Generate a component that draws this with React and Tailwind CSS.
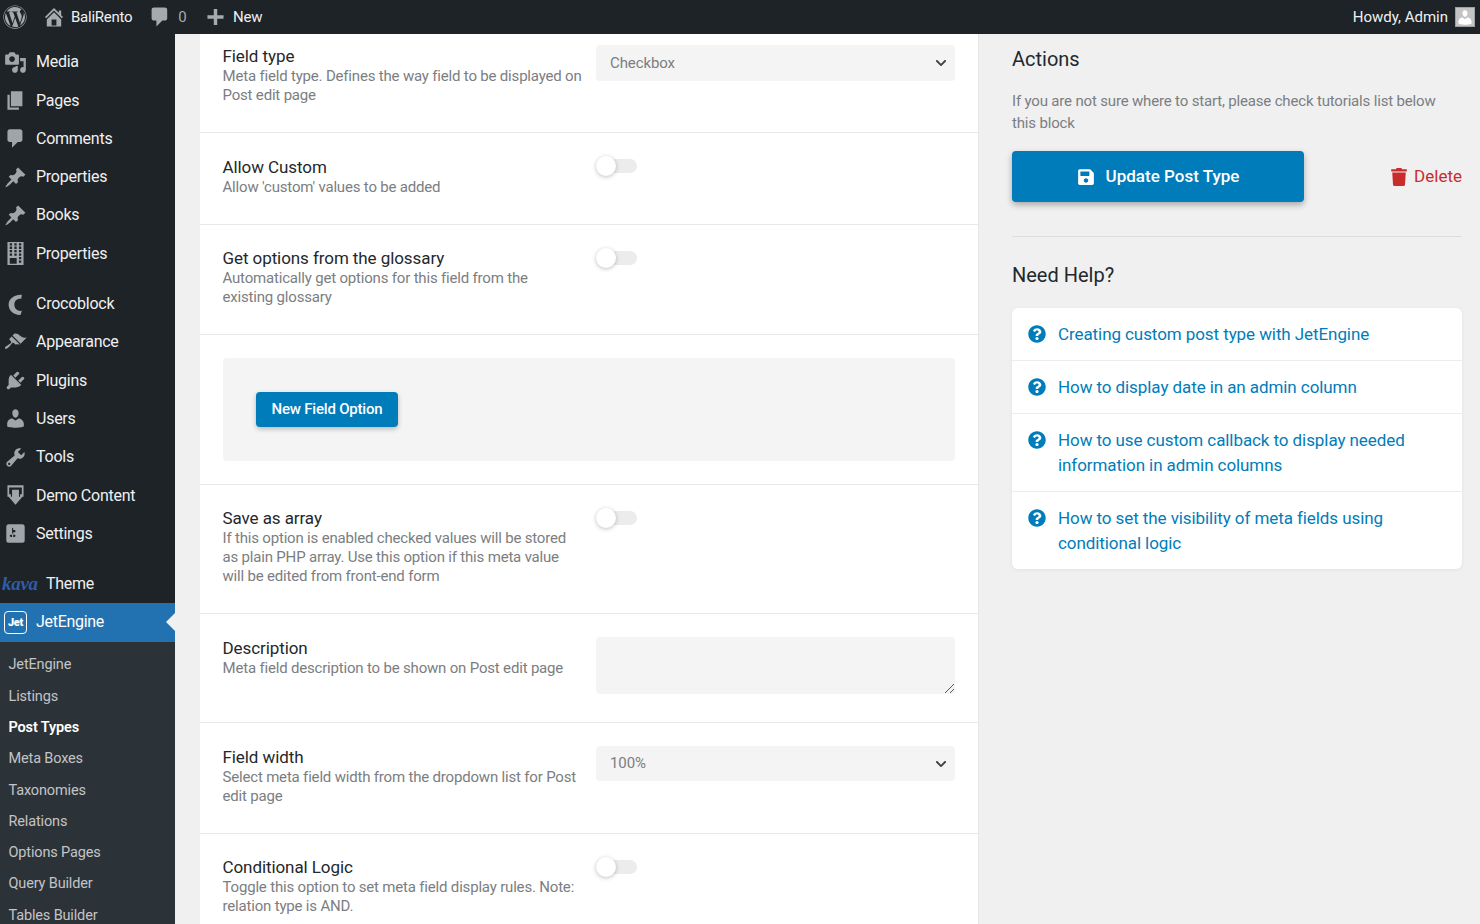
import { FaWordpress, FaSave, FaTrash, FaQuestionCircle, FaChevronDown } from "react-icons/fa";

const P = {
  media: "M13 11V4c0-.55-.45-1-1-1h-1.67L9 1H5L3.67 3H2c-.55 0-1 .45-1 1v7c0 .55.45 1 1 1h10c.55 0 1-.45 1-1zM7 4.5c1.38 0 2.5 1.12 2.5 2.5S8.38 9.5 7 9.5 4.5 8.38 4.5 7 5.62 4.5 7 4.5zM14 6h5v10.5c0 1.38-1.12 2.5-2.5 2.5S14 17.88 14 16.5s1.12-2.5 2.5-2.5c.17 0 .34.02.5.05V9h-3V6zm-4 8.05V13h2v3.5c0 1.38-1.12 2.5-2.5 2.5S7 17.88 7 16.5 8.12 14 9.5 14c.17 0 .34.02.5.05z",
  pages: "M6 15V2h10v13H6zm-1 1h8v2H3V5h2v11z",
  comment: "M5 2h9q.82 0 1.41.59T16 4v7q0 .82-.59 1.41T14 13h-2l-5 5v-5H5q-.82 0-1.41-.59T3 11V4q0-.82.59-1.41T5 2z",
  pin: "M10.44 3.02l1.82-1.82 6.36 6.35-1.83 1.82c-1.05-.68-2.48-.57-3.41.36l-.75.75c-.92.93-1.04 2.35-.35 3.41l-1.83 1.82-2.41-2.41-2.8 2.79c-.42.42-3.38 2.71-3.8 2.29s1.86-3.39 2.28-3.81l2.79-2.79L4.1 9.36l1.83-1.82c1.05.69 2.48.57 3.4-.36l.75-.75c.93-.92 1.05-2.35.36-3.41z",
  building: "M3 20h14V0H3v20zM7 3H5V1h2v2zm4 0H9V1h2v2zm4 0h-2V1h2v2zM7 6H5V4h2v2zm4 0H9V4h2v2zm4 0h-2V4h2v2zM7 9H5V7h2v2zm4 0H9V7h2v2zm4 0h-2V7h2v2zm-8 3H5v-2h2v2zm4 0H9v-2h2v2zm4 0h-2v-2h2v2zm-4 7H5v-5h6v5zm4-4h-2v-2h2v2zm0 3h-2v-2h2v2z",
  croco: "M15.500 1.500C10 1 4 4.500 4 10s5 9.500 10.500 9l1-3.500c-4 .5-6.500-2-6.500-5.500s2.500-5.500 6-5z",
  brush: "M14.48 11.06L7.41 3.99l1.5-1.5c.5-.56 2.3-.47 3.51.32 1.21.8 1.43 1.28 2.91 2.1 1.18.64 2.45 1.26 4.45.85zm-.71.71L6.7 4.7 4.93 6.47c-.39.39-.39 1.02 0 1.41l1.06 1.06c.39.39.39 1.03 0 1.42-.6.6-1.43 1.11-2.21 1.69-.35.26-.7.53-1.01.84C1.43 13.23.4 14.85 1.02 15.47c.61.62 2.24-.41 3.58-1.76.31-.31.58-.66.85-1.02.57-.78 1.08-1.61 1.69-2.21.39-.39 1.02-.39 1.41 0l1.06 1.06c.39.39 1.02.39 1.41 0z",
  plug: "M13.11 4.36L9.87 7.6 8 5.73l3.24-3.24c.35-.34 1.05-.2 1.56.32.52.51.66 1.21.31 1.55zm-8 1.77l.91-1.12 9.01 9.01-1.19.84c-.71.71-2.63 1.16-3.82 1.16H6.14L4.9 17.26c-.59.59-1.54.59-2.12 0-.59-.58-.59-1.53 0-2.12l1.24-1.24v-3.88c0-1.13.4-3.19 1.09-3.89zm7.26 3.97l3.24-3.24c.34-.35 1.04-.21 1.55.31.52.51.66 1.21.31 1.55l-3.24 3.25z",
  user: "M10 9.25c-2.27 0-2.73-3.44-2.73-3.44C7 4.02 7.82 2 9.97 2c2.16 0 2.98 2.02 2.71 3.81 0 0-.41 3.44-2.68 3.44zm0 2.57L12.72 10c2.39 0 4.52 2.33 4.52 4.53v2.49s-3.65 1.13-7.24 1.13c-3.65 0-7.24-1.13-7.24-1.13v-2.49c0-2.25 1.94-4.48 4.47-4.48z",
  tool: "M16.68 9.77c-1.34 1.34-3.3 1.67-4.95.99l-5.41 6.52c-.99.99-2.59.99-3.58 0s-.99-2.59 0-3.57l6.52-5.42c-.68-1.65-.35-3.61.99-4.95 1.28-1.28 3.12-1.62 4.72-1.06l-2.89 2.89 2.82 2.82 2.86-2.87c.53 1.58.18 3.39-1.08 4.65zM3.81 16.21c.4.39 1.04.39 1.43 0 .4-.4.4-1.04 0-1.43-.39-.4-1.03-.4-1.43 0-.39.39-.39 1.03 0 1.43z",
  demo: "M3 1h14v10h-3V9h1.500V3h-11v6H6v2H3zM7 5h6v6h3l-6 7-6-7h3z",
  sliders: "M18 16V4c0-1.1-.9-2-2-2H4c-1.1 0-2 .9-2 2v12c0 1.1.9 2 2 2h12c1.1 0 2-.9 2-2zM8 11h1c.55 0 1 .45 1 1s-.45 1-1 1H8v1.5c0 .28-.22.5-.5.5s-.5-.22-.5-.5V13H6c-.55 0-1-.45-1-1s.45-1 1-1h1V5.5c0-.28.22-.5.5-.5s.5.22.5.5V7h1c.55 0 1 .45 1 1s-.45 1-1 1h-1v5.5c0 .28-.22.5-.5.5s-.5-.22-.5-.5V9z",
  home: "M16 8.5l1.53 1.53-1.06 1.06L10 4.62l-6.47 6.47-1.06-1.06L10 2.5l4 4v-2h2v4zm-6-2.46l6 5.99V18H4v-5.97zM12 17v-5H8v5h4z",
  plus: "M17 8v3h-5.500v5.500h-3V11H3V8h5.500V2.500h3V8z",
};

const Dash = ({ d, className }) => (
  <svg viewBox="0 0 20 20" fill="currentColor" fillRule="evenodd" className={className}>
    <path d={d} />
  </svg>
);

const MENU_TOP = [
  { icon: P.media, label: "Media" },
  { icon: P.pages, label: "Pages" },
  { icon: P.comment, label: "Comments" },
  { icon: P.pin, label: "Properties" },
  { icon: P.pin, label: "Books" },
  { icon: P.building, label: "Properties" },
];

const MENU_MID = [
  { icon: P.croco, label: "Crocoblock" },
  { icon: P.brush, label: "Appearance" },
  { icon: P.plug, label: "Plugins" },
  { icon: P.user, label: "Users" },
  { icon: P.tool, label: "Tools" },
  { icon: P.demo, label: "Demo Content" },
  { icon: P.sliders, label: "Settings" },
];

const SUBMENU = ["JetEngine", "Listings", "Post Types", "Meta Boxes", "Taxonomies", "Relations", "Options Pages", "Query Builder", "Tables Builder"];

const HELP = [
  "Creating custom post type with JetEngine",
  "How to display date in an admin column",
  "How to use custom callback to display needed information in admin columns",
  "How to set the visibility of meta fields using conditional logic",
];

function MenuRow({ icon, label }) {
  return (
    <div className="h-[38.3px] flex items-center text-[16px] tracking-[-0.25px] text-[#f0f0f1]">
      <div className="w-[30px] mr-[6px] flex justify-center">
        <Dash d={icon} className="w-[23px] h-[23px] text-[#a0a5aa]" />
      </div>
      <span>{label}</span>
    </div>
  );
}

function Toggle() {
  return (
    <div className="flex items-center w-[41px] h-[20px] relative">
      <div className="w-full h-[14px] rounded-full bg-[#ececec]" />
      <div className="absolute left-0 top-0 w-[20px] h-[20px] rounded-full bg-white shadow-[0_1px_4px_rgba(0,0,0,0.25)]" />
    </div>
  );
}

function Select({ value, height = "h-[36px]" }) {
  return (
    <div className={`${height} rounded-[4px] bg-[#f4f4f4] flex items-center justify-between pl-[14px] pr-[8px] text-[15px] tracking-[-0.1px] text-[#7b7e81]`}>
      <span>{value}</span>
      <FaChevronDown className="w-[12px] h-[12px] text-[#444]" />
    </div>
  );
}

function Row({ title, desc, height, top = "pt-[23px]", shift = "", children }) {
  return (
    <div className={`flex border-b border-[#e8e8e8] pl-[22.5px] pr-[23px] ${top} ${height}`}>
      <div className={`w-[373.5px] shrink-0 pr-[12px] ${shift}`}>
        <div className="text-[17px] leading-[21px] tracking-[-0.08px] text-[#23282d]">{title}</div>
        <div className="text-[15px] leading-[19px] tracking-[-0.185px] text-[#7b7e81]">{desc}</div>
      </div>
      <div className="flex-1">{children}</div>
    </div>
  );
}

export default function App() {
  return (
    <div className="h-[924px] w-[1480px] overflow-hidden flex flex-col bg-[#f0f0f1] font-['Roboto',sans-serif]">
      {/* Admin bar */}
      <div className="h-[34px] shrink-0 bg-[#1d2327] flex items-center text-[15px] tracking-[-0.25px] text-[#f0f0f1]">
        <FaWordpress className="ml-[3px] w-[24px] h-[24px] text-[#a7aaad]" />
        <Dash d={P.home} className="ml-[15px] w-[24px] h-[24px] text-[#a7aaad]" />
        <span className="ml-[5px]">BaliRento</span>
        <Dash d={P.comment} className="ml-[16px] w-[24px] h-[24px] text-[#a7aaad]" />
        <span className="ml-[6px] text-[#a7aaad]">0</span>
        <Dash d={P.plus} className="ml-[17px] w-[23px] h-[23px] text-[#a7aaad]" />
        <span className="ml-[6.5px]">New</span>
        <span className="ml-auto tracking-normal">Howdy, Admin</span>
        <div className="ml-[7px] mr-[5px] w-[20px] h-[20px] bg-[#c4c4c4] border border-[#a0a0a0] overflow-hidden flex items-center justify-center">
          <Dash d={P.user} className="w-[19px] h-[19px] text-white" />
        </div>
      </div>

      <div className="flex flex-1 min-h-0">
        {/* Sidebar */}
        <div className="w-[175px] shrink-0 bg-[#1d2327] pt-[9.1px]">
          {MENU_TOP.map((m, i) => <MenuRow key={i} {...m} />)}
          <div className="h-[12px]" />
          {MENU_MID.map((m) => <MenuRow key={m.label} {...m} />)}
          <div className="h-[12px]" />
          <div className="h-[38.3px] flex items-center text-[16px] tracking-[-0.3px] text-[#f0f0f1]">
            <span className="ml-[2px] w-[44px] text-[19px] italic font-bold text-[#2f5da8] font-['Liberation_Serif',serif]">kava</span>
            <span>Theme</span>
          </div>
          <div className="relative h-[38.3px] flex items-center bg-[#2271b1] text-[16px] tracking-[-0.3px] text-white">
            <div className="ml-[4px] w-[23px] h-[23px] rounded-[4px] border-[1.5px] border-white flex items-center justify-center text-[11px] font-black leading-none">Jet</div>
            <span className="ml-[9px]">JetEngine</span>
            <div className="absolute right-0 top-[10px] border-y-[9px] border-y-transparent border-r-[9px] border-r-[#f0f0f1]" />
          </div>
          <div className="bg-[#2c3338] pt-[8px] h-[400px]">
            {SUBMENU.map((s) => (
              <div key={s} className={`h-[31.3px] flex items-center pl-[8.5px] text-[14.5px] tracking-[-0.15px] ${s === "Post Types" ? "font-semibold text-white" : "text-[#c3c4c7]"}`}>
                {s}
              </div>
            ))}
          </div>
        </div>

        {/* Main form */}
        <div className="w-[779px] shrink-0 ml-[25px] h-[1000px] bg-white border-r border-[#e6e6e6]">
          <Row title="Field type" desc="Meta field type. Defines the way field to be displayed on Post edit page" height="h-[99px]" top="pt-[11px]" shift="mt-[1px]">
            <Select value="Checkbox" />
          </Row>
          <Row title="Allow Custom" desc="Allow 'custom' values to be added" height="h-[92px]" shift="mt-[1px]"><Toggle /></Row>
          <Row title="Get options from the glossary" desc={<>Automatically get options for this field from the<br />existing glossary</>} height="h-[110px]"><Toggle /></Row>
          <div className="h-[150px] border-b border-[#e8e8e8] pl-[22.5px] pr-[23px] pt-[23px]">
            <div className="h-[103px] rounded-[4px] bg-[#f4f4f4] flex items-center pl-[33.5px]">
              <button className="h-[35px] w-[142px] rounded-[4px] bg-[#007cba] text-white text-[15px] tracking-[-0.2px] font-medium shadow-[0_2px_5px_rgba(0,0,0,0.25)]">New Field Option</button>
            </div>
          </div>
          <Row title="Save as array" desc={<>If this option is enabled checked values will be stored<br />as plain PHP array. Use this option if this meta value<br />will be edited from front-end form</>} height="h-[129px]"><Toggle /></Row>
          <Row title="Description" desc="Meta field description to be shown on Post edit page" height="h-[109px]" shift="mt-[1px]">
            <div className="relative h-[57px] rounded-[4px] bg-[#f4f4f4]">
              <svg viewBox="0 0 12 12" className="absolute right-0 bottom-0 w-[12px] h-[12px] text-[#555]" stroke="currentColor" fill="none">
                <path d="M11 2 2 11M11 7l-4 4" />
              </svg>
            </div>
          </Row>
          <Row title="Field width" desc="Select meta field width from the dropdown list for Post edit page" height="h-[111px]" shift="mt-[1px]">
            <Select value="100%" height="h-[35px]" />
          </Row>
          <Row title="Conditional Logic" desc="Toggle this option to set meta field display rules. Note: relation type is AND." height="h-[110px]"><Toggle /></Row>
        </div>

        {/* Right column */}
        <div className="ml-[33px] w-[450px] shrink-0">
          <h2 className="mt-[11px] text-[20px] leading-[28px] text-[#23282d]">Actions</h2>
          <p className="mt-[17px] text-[15px] leading-[22px] tracking-[-0.17px] text-[#7b7e81]">If you are not sure where to start, please check tutorials list below this block</p>
          <div className="mt-[17px] flex items-center justify-between">
            <button className="h-[51px] w-[292px] rounded-[4px] bg-[#007cba] text-white text-[17px] font-medium flex items-center justify-center gap-[11px] shadow-[0_3px_6px_rgba(0,0,0,0.3)]">
              <FaSave className="w-[18px] h-[18px]" />
              Update Post Type
            </button>
            <div className="flex items-center gap-[7px] text-[17px] text-[#c92c2c]">
              <FaTrash className="w-[16px] h-[18px]" />
              Delete
            </div>
          </div>
          <div className="mt-[34px] border-t border-[#dcdcde]" />
          <h2 className="mt-[24px] text-[20px] leading-[28px] text-[#23282d]">Need Help?</h2>
          <div className="mt-[19px] rounded-[6px] bg-white shadow-[0_1px_4px_rgba(0,0,0,0.06)]">
            {HELP.map((h, i) => (
              <div key={h} className={`flex gap-[12px] pl-[16px] pr-[40px] py-[13.5px] text-[17px] leading-[25px] tracking-[-0.08px] text-[#007cba] ${i ? "border-t border-[#ececec]" : ""}`}>
                <FaQuestionCircle className="mt-[3.5px] w-[18px] h-[18px] shrink-0" />
                <span>{h}</span>
              </div>
            ))}
          </div>
        </div>
      </div>
    </div>
  );
}
